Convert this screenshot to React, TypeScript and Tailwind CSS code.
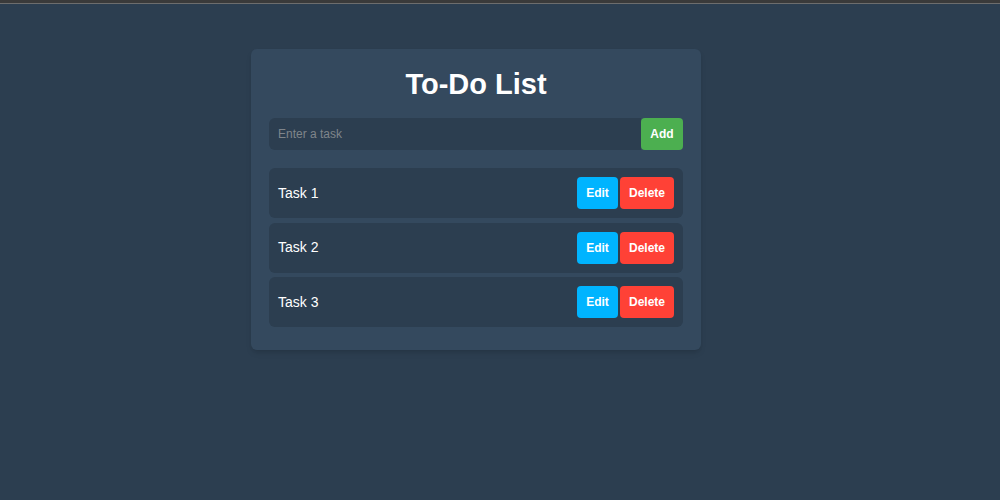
import React, { useState } from 'react';

const font = { fontFamily: '"Liberation Sans", Arial, sans-serif' };

export default function App() {
  const [tasks] = useState(['Task 1', 'Task 2', 'Task 3']);

  return (
    <div className="w-[1000px] h-[500px] bg-[#2c3e50] flex flex-col" style={font}>
      {/* browser chrome strip at the top */}
      <div className="h-[3px] bg-[#3a3a3a]" />
      <div className="h-[1px] bg-[#6d6d6d]" />

      <div className="flex-1 pt-[45px] pl-[251px]">
        <div className="w-[450px] bg-[#34495e] rounded-md shadow-md px-[18px] pt-[15px] pb-[23px]">
          <h1 className="text-white text-[29px] font-bold text-center leading-[40px]">To-Do List</h1>

          <div className="flex mt-[14px] h-[32px]">
            <input
              type="text"
              placeholder="Enter a task"
              className="flex-1 bg-[#2c3e50] rounded-l-md px-[9px] text-[12px] text-white placeholder:text-[#7f858b] outline-none"
            />
            <button className="w-[42px] bg-[#4caf50] text-white text-[12px] font-bold rounded">Add</button>
          </div>

          <ul className="mt-[18px] flex flex-col gap-[4.5px]">
            {tasks.map((task) => (
              <li key={task} className="h-[50px] bg-[#2c3e50] rounded-md flex items-center justify-between pl-[9px] pr-[9px]">
                <span className="text-white text-[14px]">{task}</span>
                <div className="flex gap-[2px]">
                  <button className="w-[41px] h-[32px] bg-[#00b4ff] text-white text-[12px] font-bold rounded">Edit</button>
                  <button className="w-[54px] h-[32px] bg-[#ff4136] text-white text-[12px] font-bold rounded">Delete</button>
                </div>
              </li>
            ))}
          </ul>
        </div>
      </div>
    </div>
  );
}
